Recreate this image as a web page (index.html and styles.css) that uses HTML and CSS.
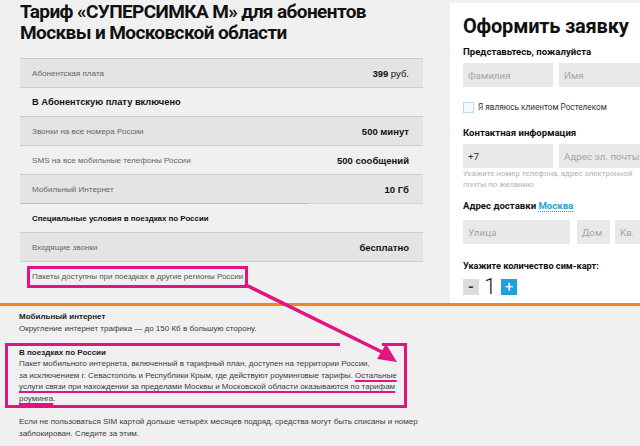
FILE: index.html
```html
<!DOCTYPE html>
<html lang="ru">
<head>
<meta charset="utf-8">
<title>Тариф «СУПЕРСИМКА М»</title>
<link rel="stylesheet" href="styles.css">
</head>
<body>
<div class="page">
  <div class="top">
    <main class="left">
      <h1 class="title">Тариф «СУПЕРСИМКА М» для абонентов<br>Москвы и Московской области</h1>
      <div class="tariff">
        <div class="row shaded"><span class="label">Абонентская плата</span><span class="value"><b>399</b> руб.</span></div>
        <div class="row section">В Абонентскую плату включено</div>
        <div class="row shaded"><span class="label">Звонки на все номера России</span><span class="value"><b>500 минут</b></span></div>
        <div class="row"><span class="label">SMS на все мобильные телефоны России</span><span class="value"><b>500 сообщений</b></span></div>
        <div class="row shaded split"><span class="label">Мобильный Интернет</span><span class="value"><b>10 Гб</b></span></div>
        <div class="row section small">Специальные условия в поездках по России</div>
        <div class="row shaded"><span class="label">Входящие звонки</span><span class="value"><b>бесплатно</b></span></div>
      </div>
      <div class="note-box">Пакеты доступны при поездках в другие регионы России</div>
    </main>
    <aside class="order">
      <h2 class="order-title">Оформить заявку</h2>
      <h3 class="order-label first">Представьтесь, пожалуйста</h3>
      <div class="fields">
        <div class="field w90">Фамилия</div>
        <div class="field w90">Имя</div>
      </div>
      <label class="check"><span class="box"></span>Я являюсь клиентом Ростелеком</label>
      <h3 class="order-label contact">Контактная информация</h3>
      <div class="fields">
        <div class="field w90 filled">+7</div>
        <div class="field w90">Адрес эл. почты</div>
      </div>
      <p class="hint">Укажите номер телефона, адрес электронной<br>почты по желанию</p>
      <h3 class="order-label address">Адрес доставки <span class="city">Москва</span></h3>
      <div class="fields">
        <div class="field w107">Улица</div>
        <div class="field w33 g7">Дом</div>
        <div class="field w40 g5">Кв.</div>
      </div>
      <h3 class="order-label count">Укажите количество сим-карт:</h3>
      <div class="counter">
        <span class="btn minus">-</span>
        <span class="qty">1</span>
        <span class="btn plus">+</span>
      </div>
    </aside>
  </div>
  <div class="rule"></div>
  <section class="details">
    <p><b>Мобильный интернет</b><br>Округление интернет трафика — до 150 Кб в большую сторону.</p>
    <div class="mark-box">
      <p><b>В поездках по России</b><br>Пакет мобильного интернета, включенный в тарифный план, доступен на территории России,<br>за исключением г. Севастополь и Республики Крым, где действуют роуминговые тарифы. <span class="ul">Остальные<br>услуги связи при нахождении за пределами Москвы и Московской области оказываются по тарифам<br>роуминга</span>.</p>
    </div>
    <p class="last">Если не пользоваться SIM картой дольше четырёх месяцев подряд, средства могут быть списаны и номер<br>заблокирован. Следите за этим.</p>
  </section>
  <svg class="arrow" width="640" height="446" viewBox="0 0 640 446" aria-hidden="true">
    <line x1="246" y1="285" x2="384" y2="353" stroke="#e2157f" stroke-width="3.5" stroke-linecap="round"/>
    <polygon points="397,362 377,359 386,344" fill="#e2157f"/>
  </svg>
</div>
</body>
</html>
```

FILE: styles.css
```css
* { box-sizing: border-box; margin: 0; padding: 0; }
html, body { width: 640px; height: 446px; overflow: hidden; }
body { background: #f0f0f0; font-family: "Liberation Sans", Arial, sans-serif; color: #333; }
.page { position: relative; width: 640px; height: 446px; }

.top { display: flex; height: 303px; }
.left { width: 450px; flex: none; padding: 1px 0 0 20px; }
.title { font-family: Roboto, sans-serif; font-weight: 700; font-size: 19px; line-height: 21px; color: #111; letter-spacing: -0.6px; }

.tariff { margin-top: 15px; width: 403px; border-top: 1px solid #cbcbcb; }
.row { display: flex; justify-content: space-between; align-items: center; height: 29px; padding: 0 14px 0 12px; border-bottom: 1px solid #cdcdcd; white-space: nowrap; }
.shaded { background: #e4e4e4; }
.split { border-image: linear-gradient(to right, #bdbdbd 0, #bdbdbd 71.5%, #d6d6d6 71.5%, #d6d6d6 100%) 1; }
.label { font-size: 8.1px; color: #666; }
.value { font-size: 9.5px; color: #111; }
.section { font-weight: 700; font-size: 9.3px; color: #111; }
.section.small { font-size: 7.9px; }
.note-box { display: inline-block; margin: 4px 0 0 7px; border: 3px solid #e2157f; padding: 2px 2px 2px 2px; font-size: 8px; line-height: 12px; color: #555; white-space: nowrap; }

.order { width: 190px; flex: none; margin-top: 3px; background: #fff; padding: 11px 0 0 13px; font-family: Roboto, sans-serif; overflow: hidden; white-space: nowrap; }
.order-title { font-size: 20px; line-height: 24px; font-weight: 700; color: #111; letter-spacing: -0.2px; }
.order-label { font-size: 9.6px; line-height: 14px; font-weight: 700; color: #111; }
.order-label.first { margin-top: 7px; }
.order-label.contact { margin-top: 12px; }
.order-label.address { margin-top: 9px; }
.order-label.count { margin-top: 15px; font-size: 9.2px; }
.fields { display: flex; gap: 6px; margin-top: 4px; }
.order-label.address + .fields { margin-top: 7px; }
.field { flex: none; height: 24px; background: #e9e9e9; font-size: 9.8px; color: #a5a5a5; padding-left: 5px; display: flex; align-items: center; }
.field.filled { color: #333; }
.w90 { width: 90px; }
.w107 { width: 107px; }
.w33 { width: 33px; }
.w40 { width: 40px; }
.g7 { margin-left: 1px; }
.g5 { margin-left: -1px; }
.check { display: flex; align-items: center; gap: 4px; margin-top: 13px; font-size: 8.2px; line-height: 14px; color: #333; }
.check .box { width: 11px; height: 11px; border: 1px solid #b8dbe9; background: #f4fbfe; }
.hint { font-size: 7.9px; line-height: 11px; color: #b0b0b0; }
.city { color: #2a9fd6; border-bottom: 1px dotted #2a9fd6; }
.counter { display: flex; align-items: center; margin-top: 6px; height: 16px; }
.btn { width: 16px; height: 16px; display: flex; align-items: center; justify-content: center; font-size: 15px; line-height: 16px; }
.minus { background: #dcdcdc; color: #333; font-weight: 700; }
.plus { background: #1ea0dc; color: #fff; }
.qty { width: 22px; text-align: center; font-size: 22px; font-weight: 300; color: #222; line-height: 16px; }

.rule { height: 3px; background: #ef861e; }

.details { padding: 5px 0 0 19px; font-size: 8px; line-height: 11.5px; color: #3c3c3c; white-space: nowrap; }
.details b { color: #222; }
.mark-box { position: relative; margin: 8.5px 0 0 -14px; width: 402px; border: 3px solid #e2157f; padding: 1px 0 1px 11px; }
.mark-box::before { content: ""; position: absolute; top: -3px; left: 332px; width: 42px; height: 3px; background: #f0f0f0; }
.ul { text-decoration: underline; text-decoration-color: #e2157f; text-decoration-thickness: 2px; text-underline-offset: 2px; }
.last { margin-top: 8px; }

.arrow { position: absolute; top: 0; left: 0; pointer-events: none; }
```
